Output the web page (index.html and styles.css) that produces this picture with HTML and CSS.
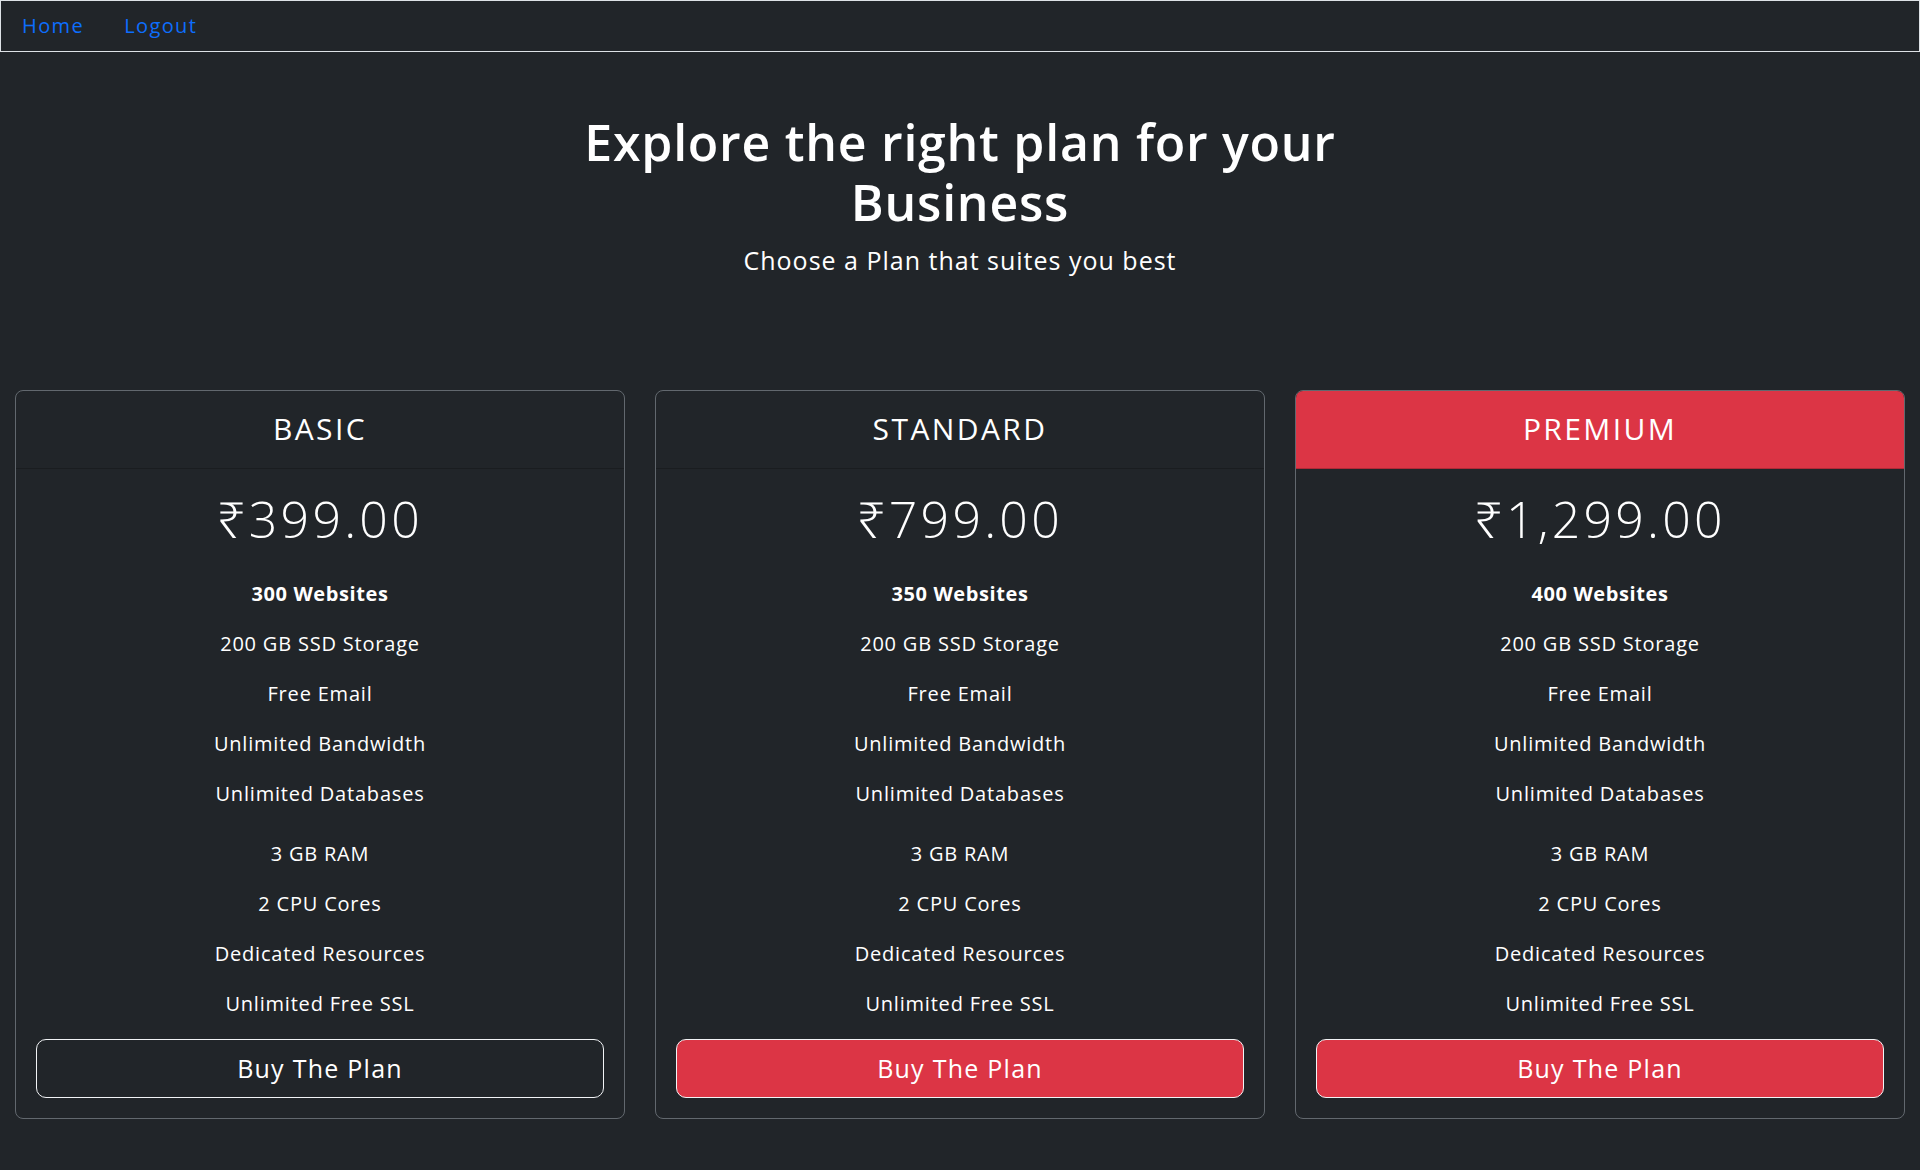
FILE: index.html
```html
<!DOCTYPE html>
<html lang="en">
<head>
<meta charset="utf-8">
<title>Pricing</title>
<link rel="stylesheet" href="styles.css">
</head>
<body>
<nav class="navbar">
  <a class="nav-link" href="#">Home</a>
  <a class="nav-link" href="#">Logout</a>
</nav>

<header class="hero">
  <h1 class="hero-title">Explore the right plan for your Business</h1>
  <p class="hero-lead">Choose a Plan that suites you best</p>
</header>

<main class="plans">
  <section class="card">
    <div class="card-header"><h4 class="card-name">BASIC</h4></div>
    <div class="card-body">
      <h1 class="price">₹399.00</h1>
      <ul class="features">
        <li class="strong">300 Websites</li>
        <li>200 GB SSD Storage</li>
        <li>Free Email</li>
        <li>Unlimited Bandwidth</li>
        <li>Unlimited Databases</li>
      </ul>
      <ul class="features features-extra">
        <li>3 GB RAM</li>
        <li>2 CPU Cores</li>
        <li>Dedicated Resources</li>
        <li>Unlimited Free SSL</li>
      </ul>
      <button class="btn btn-outline">Buy The Plan</button>
    </div>
  </section>

  <section class="card">
    <div class="card-header"><h4 class="card-name">STANDARD</h4></div>
    <div class="card-body">
      <h1 class="price">₹799.00</h1>
      <ul class="features">
        <li class="strong">350 Websites</li>
        <li>200 GB SSD Storage</li>
        <li>Free Email</li>
        <li>Unlimited Bandwidth</li>
        <li>Unlimited Databases</li>
      </ul>
      <ul class="features features-extra">
        <li>3 GB RAM</li>
        <li>2 CPU Cores</li>
        <li>Dedicated Resources</li>
        <li>Unlimited Free SSL</li>
      </ul>
      <button class="btn btn-danger">Buy The Plan</button>
    </div>
  </section>

  <section class="card">
    <div class="card-header card-header-danger"><h4 class="card-name">PREMIUM</h4></div>
    <div class="card-body">
      <h1 class="price">₹1,299.00</h1>
      <ul class="features">
        <li class="strong">400 Websites</li>
        <li>200 GB SSD Storage</li>
        <li>Free Email</li>
        <li>Unlimited Bandwidth</li>
        <li>Unlimited Databases</li>
      </ul>
      <ul class="features features-extra">
        <li>3 GB RAM</li>
        <li>2 CPU Cores</li>
        <li>Dedicated Resources</li>
        <li>Unlimited Free SSL</li>
      </ul>
      <button class="btn btn-danger">Buy The Plan</button>
    </div>
  </section>
</main>
</body>
</html>
```

FILE: styles.css
```css
* {
  box-sizing: border-box;
}

html, body {
  margin: 0;
  padding: 0;
}

body {
  background: #212529;
  color: #ffffff;
  font-family: "Open Sans", "Noto Sans", "DejaVu Sans", sans-serif;
  letter-spacing: 0.05em;
  min-height: 1170px;
}

.navbar {
  display: flex;
  align-items: center;
  border: 1px solid #dee2e6;
  padding: 0 0 0 1px;
}

.nav-link {
  display: block;
  padding: 10px 20px;
  font-size: 20px;
  line-height: 30px;
  letter-spacing: 0.07em;
  color: #0d6efd;
  text-decoration: none;
}

.hero {
  text-align: center;
  padding-top: 60px;
}

.hero-title {
  max-width: 840px;
  margin: 0 auto 10px;
  font-size: 50px;
  font-weight: 600;
  line-height: 1.2;
  letter-spacing: 0.015em;
}

.hero-lead {
  margin: 0;
  font-size: 25px;
  font-weight: 400;
  line-height: 1.5;
  letter-spacing: 0.04em;
}

.plans {
  display: grid;
  grid-template-columns: repeat(3, 1fr);
  gap: 30px;
  padding: 110px 15px 0;
}

.card {
  border: 1px solid #62686e;
  border-radius: 8px;
  overflow: hidden;
  text-align: center;
}

.card-header {
  padding: 20px 20px 21px;
  border-bottom: 1px solid rgba(0, 0, 0, 0.2);
}

.card-header-danger {
  background: #dc3545;
}

.card-name {
  margin: 0;
  font-size: 30px;
  font-weight: 400;
  line-height: 36px;
  letter-spacing: 0.08em;
}

.card-body {
  padding: 20px;
}

.price {
  margin: 0;
  font-size: 50px;
  font-weight: 300;
  line-height: 60px;
  letter-spacing: 0.065em;
}

.features {
  list-style: none;
  margin: 30px 0 0;
  padding: 0;
}

.features li {
  font-size: 20px;
  line-height: 30px;
  margin-bottom: 20px;
}

.features li.strong {
  font-weight: 700;
  letter-spacing: 0.03em;
}

.features-extra {
  margin-top: 30px;
}

.btn {
  display: block;
  width: 100%;
  padding: 10px 20px;
  font-family: inherit;
  font-size: 25px;
  line-height: 37.5px;
  letter-spacing: 0.05em;
  color: #ffffff;
  border: 1px solid #f1f3f5;
  border-radius: 10px;
  cursor: pointer;
}

.btn-outline {
  background: transparent;
}

.btn-danger {
  background: #dc3545;
}
```
